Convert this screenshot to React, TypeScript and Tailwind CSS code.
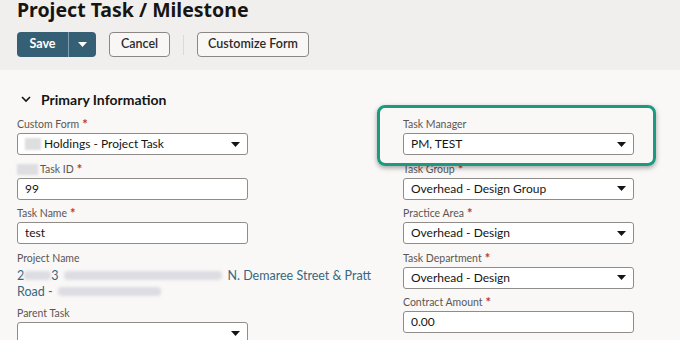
import React from "react"

const font = { fontFamily: 'Lato, "Noto Sans", Arial, sans-serif' }
const titleFont = { fontFamily: '"Noto Sans", "Open Sans", Arial, sans-serif' }

function Caret({ className = "" }: { className?: string }) {
  return (
    <svg width="9" height="5" viewBox="0 0 9 5" className={className}>
      <path d="M0 0h9L4.5 5z" fill="currentColor" />
    </svg>
  )
}

function Req() {
  return <span className="ml-[3px] text-[13px] font-bold leading-none text-[#c0392b]">*</span>
}

function Blur({ w, h = 9 }: { w: number; h?: number }) {
  return <span className="inline-block rounded-sm bg-[#dcdce2] blur-[1.5px] align-middle" style={{ width: w, height: h }} />
}

function Label({ children, req }: { children: React.ReactNode; req?: boolean }) {
  return (
    <div className="flex h-[16px] items-start pt-px text-[10.5px] leading-[13px] text-[#595755]">
      <span className="flex items-center">{children}</span>
      {req && <Req />}
    </div>
  )
}

function Field({ value, select, lead }: { value?: string; select?: boolean; lead?: React.ReactNode }) {
  return (
    <div className="flex h-[22px] w-[231px] items-center rounded-[3px] border border-[#8f8c89] bg-white pl-[7px] pr-[7px] text-[12px] text-[#161513]">
      {lead}
      <span className="flex-1 truncate">{value}</span>
      {select && <Caret className="text-[#161513]" />}
    </div>
  )
}

function Block({ label, req, children }: { label: React.ReactNode; req?: boolean; children: React.ReactNode }) {
  return (
    <div className="flex flex-col">
      <Label req={req}>{label}</Label>
      {children}
    </div>
  )
}

export default function App() {
  return (
    <div className="h-[340px] w-[680px] overflow-hidden bg-[#f9f8f7]" style={font}>
      <header className="h-[70px] bg-[#f1efed] px-[17px]">
        <h1 className="text-[19.5px] font-bold leading-[20px] text-[#161513]" style={titleFont}>
          Project Task / Milestone
        </h1>
        <div className="mt-[12px] flex items-center">
          <div className="flex h-[25px] overflow-hidden rounded-[4px] bg-[#355f75] text-white">
            <button className="w-[51px] text-[12.5px] font-bold">Save</button>
            <div className="w-px bg-[#7f9fb0]" />
            <button className="flex w-[27px] items-center justify-center">
              <Caret />
            </button>
          </div>
          <button className="ml-[13px] h-[25px] w-[61px] rounded-[4px] border border-[#8a8785] bg-[#f8f7f6] text-[12.5px] font-semibold text-[#2b2a28]">
            Cancel
          </button>
          <div className="ml-[13px] h-[20px] w-px bg-[#dcd9d6]" />
          <button className="ml-[13px] h-[25px] w-[112px] rounded-[4px] border border-[#8a8785] bg-[#f8f7f6] text-[12.5px] font-semibold text-[#2b2a28]">
            Customize Form
          </button>
        </div>
      </header>

      <main className="px-[17px]">
        <div className="mt-[19px] flex h-[20px] items-center">
          <svg width="12" height="8" viewBox="0 0 12 8" className="ml-[3px]">
            <path d="M2 2l4 4 4-4" fill="none" stroke="#161513" strokeWidth="1.6" />
          </svg>
          <h2 className="ml-[9px] text-[14px] font-bold text-[#161513]">Primary Information</h2>
        </div>

        <div className="relative mt-[8px] flex">
          <div className="flex w-[386px] flex-col gap-[6.5px]">
            <Block label="Custom Form" req>
              <Field value="Holdings - Project Task" select lead={<span className="mr-[3px] inline-block h-[12px] w-[16px] bg-[#dedde0] blur-[1px]" />} />
            </Block>
            <Block
              label={
                <>
                  <span className="mr-[2px] inline-block h-[11px] w-[21px] bg-[#dedde0] blur-[1px]" />
                  Task ID
                </>
              }
              req
            >
              <Field value="99" />
            </Block>
            <Block label="Task Name" req>
              <Field value="test" />
            </Block>
            <div className="flex flex-col">
              <Label>Project Name</Label>
              <div className="mt-px text-[12.5px] leading-[16px] text-[#36677f]">
                <div className="flex h-[16px] items-center whitespace-nowrap">
                  <span>2</span>
                  <Blur w={27} />
                  <span>3</span>
                  <span className="ml-[5px]" />
                  <Blur w={158} />
                  <span className="ml-[6px]">N. Demaree Street &amp; Pratt</span>
                </div>
                <div className="flex h-[16px] items-center whitespace-nowrap">
                  <span>Road -</span>
                  <span className="ml-[5px]" />
                  <Blur w={103} />
                </div>
              </div>
            </div>
            <Block label="Parent Task">
              <Field select />
            </Block>
          </div>

          <div className="flex w-[231px] flex-col gap-[6.5px]">
            <Block label="Task Manager">
              <Field value="PM, TEST" select />
            </Block>
            <Block label="Task Group" req>
              <Field value="Overhead - Design Group" select />
            </Block>
            <Block label="Practice Area" req>
              <Field value="Overhead - Design" select />
            </Block>
            <Block label="Task Department" req>
              <Field value="Overhead - Design" select />
            </Block>
            <Block label="Contract Amount" req>
              <Field value="0.00" />
            </Block>
          </div>

          <div className="pointer-events-none absolute left-[360px] top-[-12px] h-[61px] w-[279px] rounded-[8px] border-[3px] border-[#1c9a80] shadow-[0_2px_5px_rgba(0,0,0,0.35)]" />
        </div>
      </main>
    </div>
  )
}
